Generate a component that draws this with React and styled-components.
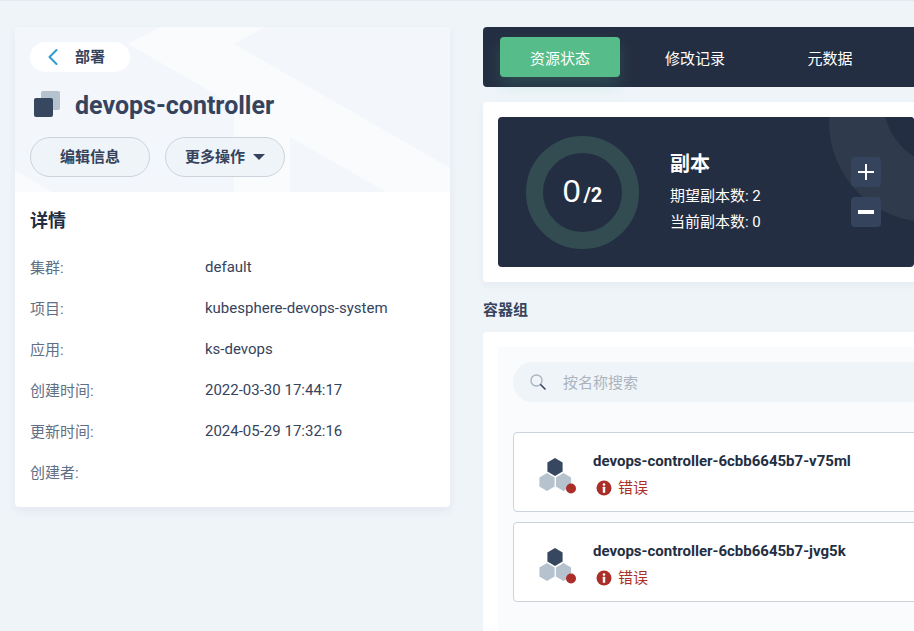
import React from "react";
import styled, { createGlobalStyle } from "styled-components";
import { ChevronLeft } from "lucide-react";

const FONT = `Roboto, "Noto Sans CJK SC", "Liberation Sans", sans-serif`;

const DETAILS = [
  { label: "集群:", value: "default" },
  { label: "项目:", value: "kubesphere-devops-system" },
  { label: "应用:", value: "ks-devops" },
  { label: "创建时间:", value: "2022-03-30 17:44:17" },
  { label: "更新时间:", value: "2024-05-29 17:32:16" },
  { label: "创建者:", value: "" },
];

const PODS = ["devops-controller-6cbb6645b7-v75ml", "devops-controller-6cbb6645b7-jvg5k"];

const GlobalStyle = createGlobalStyle`
  html, body {
    margin: 0;
    padding: 0;
    background: #eff4f9;
    font-family: ${FONT};
    color: #242e42;
    overflow: hidden;
  }
`;

const Page = styled.div`
  width: 914px;
  height: 631px;
  box-sizing: border-box;
  border-top: 1px solid #e3e9ef;
  padding: 26px 0 0 15px;
  display: flex;
  gap: 33px;
  align-items: flex-start;
  overflow: hidden;
`;

const Sidebar = styled.aside`
  flex: 0 0 435px;
  background: #fff;
  border-radius: 4px;
  box-shadow: 0 4px 8px rgba(36, 46, 66, 0.06);
  overflow: hidden;
`;

const Banner = styled.header`
  position: relative;
  height: 165px;
  box-sizing: border-box;
  padding: 15px;
  background: #f3f6fb;
`;

const BannerArt = styled.svg`
  position: absolute;
  left: 0;
  top: 0;
`;

const BannerBody = styled.div`
  position: relative;
  display: flex;
  flex-direction: column;
  align-items: flex-start;
`;

const BackPill = styled.div`
  width: 100px;
  height: 30px;
  box-sizing: border-box;
  padding-left: 9px;
  border-radius: 15px;
  background: #fff;
  display: flex;
  align-items: center;
  gap: 8px;
  font-size: 15px;
  font-weight: 700;
  color: #36435c;
  svg {
    color: #329dce;
  }
`;

const BackLabel = styled.span`
  margin-bottom: 3px;
`;

const TitleRow = styled.div`
  display: flex;
  align-items: center;
  gap: 12px;
  height: 34px;
  margin: 16px 0 15px 3px;
`;

const Title = styled.h1`
  margin: 0;
  padding-top: 2px;
  font-size: 25px;
  font-weight: 700;
  line-height: 36px;
  color: #36435c;
`;

const Actions = styled.div`
  display: flex;
  gap: 15px;
`;

const PillButton = styled.button`
  width: 120px;
  height: 40px;
  padding: 0 0 4px;
  border: 1px solid #ccd3db;
  border-radius: 20px;
  background: #eff4f9;
  display: flex;
  align-items: center;
  justify-content: center;
  gap: 8px;
  font-family: ${FONT};
  font-size: 15px;
  font-weight: 700;
  color: #36435c;
`;

const Caret = styled.span`
  width: 0;
  height: 0;
  margin-top: 4px;
  border-left: 6px solid transparent;
  border-right: 6px solid transparent;
  border-top: 6px solid #36435c;
`;

const DetailBody = styled.section`
  padding: 16px 15px 15px;
`;

const DetailHeading = styled.h2`
  margin: 0 0 12px;
  font-size: 18px;
  line-height: 26px;
  font-weight: 700;
  color: #242e42;
`;

const DetailRow = styled.div`
  display: flex;
  height: 41px;
  align-items: center;
  font-size: 15px;
`;

const DetailLabel = styled.span`
  flex: 0 0 175px;
  color: #5f7085;
`;

const DetailValue = styled.span`
  color: #36435c;
`;

const Content = styled.main`
  flex: 0 0 520px;
  display: flex;
  flex-direction: column;
`;

const TabBar = styled.nav`
  height: 60px;
  box-sizing: border-box;
  padding: 10px 17px;
  border-radius: 4px;
  background: #242e42;
  display: flex;
  gap: 15px;
`;

const Tab = styled.div`
  width: 120px;
  height: 40px;
  border-radius: 4px;
  display: flex;
  align-items: center;
  justify-content: center;
  font-size: 15px;
  color: #fff;
  background: ${(props) => (props.$active ? "#55bc8a" : "transparent")};
  box-shadow: ${(props) => (props.$active ? "0 8px 16px rgba(85, 188, 138, 0.2)" : "none")};
`;

const Card = styled.section`
  margin-top: 15px;
  padding: 15px;
  border-radius: 4px;
  background: #fff;
  box-shadow: 0 4px 8px rgba(36, 46, 66, 0.04);
`;

const ReplicaPanel = styled.div`
  position: relative;
  width: 416px;
  height: 150px;
  box-sizing: border-box;
  padding-left: 28px;
  border-radius: 4px;
  background: #242e42;
  color: #fff;
  display: flex;
  align-items: center;
  overflow: hidden;
`;

const Ring = styled.div`
  position: absolute;
  border-radius: 50%;
  background: ${(props) => props.$color};
  width: ${(props) => props.$size}px;
  height: ${(props) => props.$size}px;
  left: ${(props) => props.$x}px;
  top: ${(props) => props.$y}px;
`;

const Donut = styled.div`
  flex: 0 0 113px;
  height: 113px;
  box-sizing: border-box;
  border: 17px solid #324c52;
  border-radius: 50%;
  display: flex;
  align-items: baseline;
  justify-content: center;
  line-height: 76px;
`;

const DonutValue = styled.span`
  font-size: 32px;
  font-family: "Liberation Sans", Roboto, sans-serif;
`;

const DonutTotal = styled.span`
  font-size: 20px;
  font-weight: 700;
  margin-left: 3px;
`;

const ReplicaInfo = styled.div`
  margin-left: 31px;
  flex: 1;
`;

const ReplicaTitle = styled.div`
  font-size: 20px;
  font-weight: 700;
  line-height: 28px;
  margin-bottom: 5px;
`;

const ReplicaLine = styled.div`
  font-size: 15px;
  line-height: 26px;
`;

const Steppers = styled.div`
  position: relative;
  display: flex;
  flex-direction: column;
  gap: 10px;
  margin-right: 33px;
`;

const StepButton = styled.div`
  width: 30px;
  height: 30px;
  border-radius: 4px;
  background: #36435c;
  display: flex;
  align-items: center;
  justify-content: center;
`;

const SectionLabel = styled.h3`
  margin: 18px 0 12px;
  font-size: 15px;
  line-height: 20px;
  font-weight: 700;
  color: #36435c;
`;

const PodCard = styled.section`
  padding: 15px 15px 0;
  border-radius: 4px;
  background: #fff;
`;

const PodPanel = styled.div`
  height: 300px;
  padding: 15px;
  background: #f9fbfd;
`;

const SearchBar = styled.div`
  height: 40px;
  border-radius: 20px;
  background: #eff4f9;
  display: flex;
  align-items: center;
  padding-left: 17px;
  gap: 17px;
  font-size: 15px;
  color: #abb4be;
  margin-bottom: 30px;
`;

const SearchHint = styled.span`
  margin-bottom: 2px;
`;

const PodRow = styled.div`
  height: 80px;
  box-sizing: border-box;
  border: 1px solid #ccd3db;
  border-radius: 4px;
  background: #fff;
  display: flex;
  align-items: center;
  padding-left: 25px;
  gap: 14px;
  margin-bottom: 10px;
`;

const PodText = styled.div`
  margin-top: 4px;
`;

const PodName = styled.div`
  font-size: 15px;
  font-weight: 700;
  line-height: 20px;
  color: #242e42;
`;

const PodStatus = styled.div`
  display: flex;
  align-items: center;
  gap: 6px;
  margin: 7px 0 0 3px;
  font-size: 15px;
  line-height: 20px;
  color: #ab2f29;
`;

const CopiesIcon = () => (
  <svg width="30" height="30" viewBox="0 0 30 30">
    <rect x="8" y="1" width="19" height="19" rx="2" fill="#b6c2cd" />
    <rect x="1" y="8" width="19" height="19" rx="2" fill="#36475f" />
  </svg>
);

const SearchIcon = () => (
  <svg width="16" height="16" viewBox="0 0 16 16">
    <circle cx="6.5" cy="6.5" r="5.5" fill="none" stroke="#abb4be" strokeWidth="1.4" />
    <path d="M10.8 10.8 L15 15" stroke="#36435c" strokeWidth="1.6" strokeLinecap="round" />
  </svg>
);

const PlusIcon = () => (
  <svg width="18" height="18" viewBox="0 0 18 18">
    <path d="M9 1 V17 M1 9 H17" stroke="#fff" strokeWidth="2" fill="none" />
  </svg>
);

const MinusIcon = () => (
  <svg width="18" height="18" viewBox="0 0 18 18">
    <path d="M1 9 H17" stroke="#fff" strokeWidth="4" fill="none" />
  </svg>
);

const HEX = "M0 -9 L7.6 -4.5 L7.6 4.5 L0 9 L-7.6 4.5 L-7.6 -4.5 Z";

const PodIcon = () => (
  <svg width="40" height="44" viewBox="0 -2 40 44">
    <path d={HEX} transform="translate(16 15)" fill="#36475f" />
    <path d={HEX} transform="translate(8 30)" fill="#b6c2cd" />
    <path d={HEX} transform="translate(24.5 30)" fill="#b6c2cd" />
    <circle cx="32" cy="36.5" r="5" fill="#ab2f29" />
  </svg>
);

const ErrorIcon = () => (
  <svg width="16" height="16" viewBox="0 0 16 16">
    <circle cx="8" cy="8" r="7.5" fill="#ab2f29" />
    <circle cx="8" cy="4.5" r="1.3" fill="#fff" />
    <rect x="6.8" y="6.8" width="2.4" height="6" rx="0.4" fill="#fff" />
  </svg>
);

export default function App() {
  return (
    <>
      <GlobalStyle />
      <Page>
        <Sidebar>
          <Banner>
            <BannerArt width="435" height="165" viewBox="0 0 435 165">
              <path
                d="M145 0 H250 L219 17 L435 141 V165 H371 L275 110 V165 H219 V78 L113 17 Z"
                fill="#f9fbfd"
              />
              <path d="M0 143 L37 165 H0 Z" fill="#f9fbfd" />
            </BannerArt>
            <BannerBody>
              <BackPill>
                <ChevronLeft size={28} strokeWidth={1.8} />
                <BackLabel>部署</BackLabel>
              </BackPill>
              <TitleRow>
                <CopiesIcon />
                <Title>devops-controller</Title>
              </TitleRow>
              <Actions>
                <PillButton>编辑信息</PillButton>
                <PillButton>
                  更多操作
                  <Caret />
                </PillButton>
              </Actions>
            </BannerBody>
          </Banner>
          <DetailBody>
            <DetailHeading>详情</DetailHeading>
            {DETAILS.map((item) => (
              <DetailRow key={item.label}>
                <DetailLabel>{item.label}</DetailLabel>
                <DetailValue>{item.value}</DetailValue>
              </DetailRow>
            ))}
          </DetailBody>
        </Sidebar>

        <Content>
          <TabBar>
            <Tab $active>资源状态</Tab>
            <Tab>修改记录</Tab>
            <Tab>元数据</Tab>
          </TabBar>

          <Card>
            <ReplicaPanel>
              <Ring $color="#2f3a4d" $size={200} $x={331} $y={-95} />
              <Ring $color="#242e42" $size={134} $x={385} $y={-84} />
              <Donut>
                <DonutValue>0</DonutValue>
                <DonutTotal>/2</DonutTotal>
              </Donut>
              <ReplicaInfo>
                <ReplicaTitle>副本</ReplicaTitle>
                <ReplicaLine>期望副本数: 2</ReplicaLine>
                <ReplicaLine>当前副本数: 0</ReplicaLine>
              </ReplicaInfo>
              <Steppers>
                <StepButton>
                  <PlusIcon />
                </StepButton>
                <StepButton>
                  <MinusIcon />
                </StepButton>
              </Steppers>
            </ReplicaPanel>
          </Card>

          <SectionLabel>容器组</SectionLabel>
          <PodCard>
            <PodPanel>
              <SearchBar>
                <SearchIcon />
                <SearchHint>按名称搜索</SearchHint>
              </SearchBar>
              {PODS.map((name) => (
                <PodRow key={name}>
                  <PodIcon />
                  <PodText>
                    <PodName>{name}</PodName>
                    <PodStatus>
                      <ErrorIcon />
                      错误
                    </PodStatus>
                  </PodText>
                </PodRow>
              ))}
            </PodPanel>
          </PodCard>
        </Content>
      </Page>
    </>
  );
}
